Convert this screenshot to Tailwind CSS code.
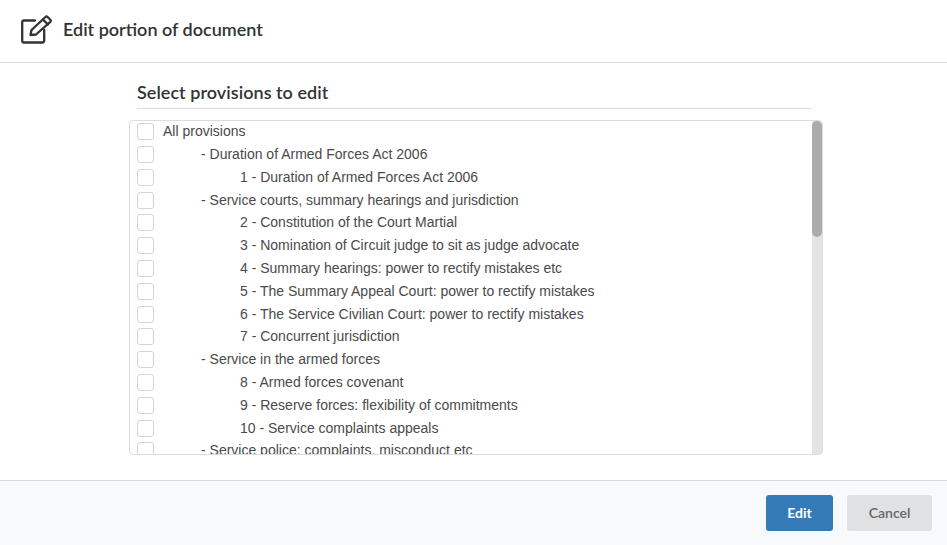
<!DOCTYPE html>
<html lang="en">
<head>
    <meta charset="UTF-8">
    <meta name="viewport" content="width=device-width, initial-scale=1.0">
    <title>Edit portion of document</title>
    <script src="https://cdn.jsdelivr.net/npm/@tailwindcss/browser@4"></script>
</head>
<body class="bg-white font-['Lato',sans-serif] text-[#333]">
    <div class="h-[545px] w-[947px] flex flex-col overflow-hidden">

        <header class="h-[63px] shrink-0 flex items-center border-b border-[#dcdcdc] pl-[21px]">
            <svg class="w-[31px] h-[29px] mr-[11px] mt-[-4px]" viewBox="0 0 31 29" fill="none" stroke="#333" stroke-width="2.300" stroke-linecap="round" stroke-linejoin="round">
                <path d="M14 5.500H3a1.800 1.800 0 0 0-1.800 1.800v18.400A1.800 1.800 0 0 0 3 27.500h18.400a1.800 1.800 0 0 0 1.800-1.800V15"/>
                <path d="M9.500 20l1-5L24.500 2a1.500 1.500 0 0 1 2.100 0l2.700 2.700a1.500 1.500 0 0 1 0 2.100L15 19.500z"/>
                <path d="M22 4.700l5 4.800"/>
            </svg>
            <h1 class="text-[18px] font-semibold leading-none mt-[-5px]">Edit portion of document</h1>
        </header>

        <main class="flex-1 relative">
            <div class="ml-[137px] w-[674px] h-[46px] border-b border-[#dcdcdc] pt-[17px]">
                <h2 class="text-[18px] font-semibold leading-[24px] tracking-[0.04px]">Select provisions to edit</h2>
            </div>

            <div class="relative ml-[129px] mt-[11px] w-[694px] h-[335px] border border-[#dcdcdc] rounded-[4px] overflow-hidden font-['Liberation_Sans',sans-serif] text-[14px] text-[#4a4a4a]">
                <ul class="pl-[7px] mt-[-0.600px]">
                    <li class="flex items-center h-[22.800px]"><span class="w-[17px] h-[17px] border border-[#d4d4d4] rounded-[3px] shrink-0"></span><span class="ml-[9px]">All provisions</span></li>
                    <li class="flex items-center h-[22.800px]"><span class="w-[17px] h-[17px] border border-[#d4d4d4] rounded-[3px] shrink-0"></span><span class="ml-[47px]">- Duration of Armed Forces Act 2006</span></li>
                    <li class="flex items-center h-[22.800px]"><span class="w-[17px] h-[17px] border border-[#d4d4d4] rounded-[3px] shrink-0"></span><span class="ml-[86px]">1 - Duration of Armed Forces Act 2006</span></li>
                    <li class="flex items-center h-[22.800px]"><span class="w-[17px] h-[17px] border border-[#d4d4d4] rounded-[3px] shrink-0"></span><span class="ml-[47px]">- Service courts, summary hearings and jurisdiction</span></li>
                    <li class="flex items-center h-[22.800px]"><span class="w-[17px] h-[17px] border border-[#d4d4d4] rounded-[3px] shrink-0"></span><span class="ml-[86px]">2 - Constitution of the Court Martial</span></li>
                    <li class="flex items-center h-[22.800px]"><span class="w-[17px] h-[17px] border border-[#d4d4d4] rounded-[3px] shrink-0"></span><span class="ml-[86px]">3 - Nomination of Circuit judge to sit as judge advocate</span></li>
                    <li class="flex items-center h-[22.800px]"><span class="w-[17px] h-[17px] border border-[#d4d4d4] rounded-[3px] shrink-0"></span><span class="ml-[86px]">4 - Summary hearings: power to rectify mistakes etc</span></li>
                    <li class="flex items-center h-[22.800px]"><span class="w-[17px] h-[17px] border border-[#d4d4d4] rounded-[3px] shrink-0"></span><span class="ml-[86px]">5 - The Summary Appeal Court: power to rectify mistakes</span></li>
                    <li class="flex items-center h-[22.800px]"><span class="w-[17px] h-[17px] border border-[#d4d4d4] rounded-[3px] shrink-0"></span><span class="ml-[86px]">6 - The Service Civilian Court: power to rectify mistakes</span></li>
                    <li class="flex items-center h-[22.800px]"><span class="w-[17px] h-[17px] border border-[#d4d4d4] rounded-[3px] shrink-0"></span><span class="ml-[86px]">7 - Concurrent jurisdiction</span></li>
                    <li class="flex items-center h-[22.800px]"><span class="w-[17px] h-[17px] border border-[#d4d4d4] rounded-[3px] shrink-0"></span><span class="ml-[47px]">- Service in the armed forces</span></li>
                    <li class="flex items-center h-[22.800px]"><span class="w-[17px] h-[17px] border border-[#d4d4d4] rounded-[3px] shrink-0"></span><span class="ml-[86px]">8 - Armed forces covenant</span></li>
                    <li class="flex items-center h-[22.800px]"><span class="w-[17px] h-[17px] border border-[#d4d4d4] rounded-[3px] shrink-0"></span><span class="ml-[86px]">9 - Reserve forces: flexibility of commitments</span></li>
                    <li class="flex items-center h-[22.800px]"><span class="w-[17px] h-[17px] border border-[#d4d4d4] rounded-[3px] shrink-0"></span><span class="ml-[86px]">10 - Service complaints appeals</span></li>
                    <li class="flex items-center h-[22.800px]"><span class="w-[17px] h-[17px] border border-[#d4d4d4] rounded-[3px] shrink-0"></span><span class="ml-[47px]">- Service police: complaints, misconduct etc</span></li>
                </ul>
                <div class="absolute top-0 right-0 bottom-0 w-[10px] bg-[#e4e4e4]">
                    <div class="h-[116px] w-[10px] bg-[#ababab] rounded-[5px]"></div>
                </div>
            </div>
        </main>

        <footer class="h-[65px] shrink-0 border-t border-[#d8d8d8] bg-[#f8f9fb] flex justify-end items-start pt-[14px] pr-[15px] gap-[14px]">
            <button class="w-[67px] h-[36px] pb-[2px] rounded-[3px] bg-[#337ab7] text-white text-[14px] font-bold">Edit</button>
            <button class="w-[85px] h-[36px] pb-[2px] rounded-[3px] bg-[#e0e1e3] text-[#666] text-[14px] font-semibold">Cancel</button>
        </footer>
    </div>
</body>
</html>
